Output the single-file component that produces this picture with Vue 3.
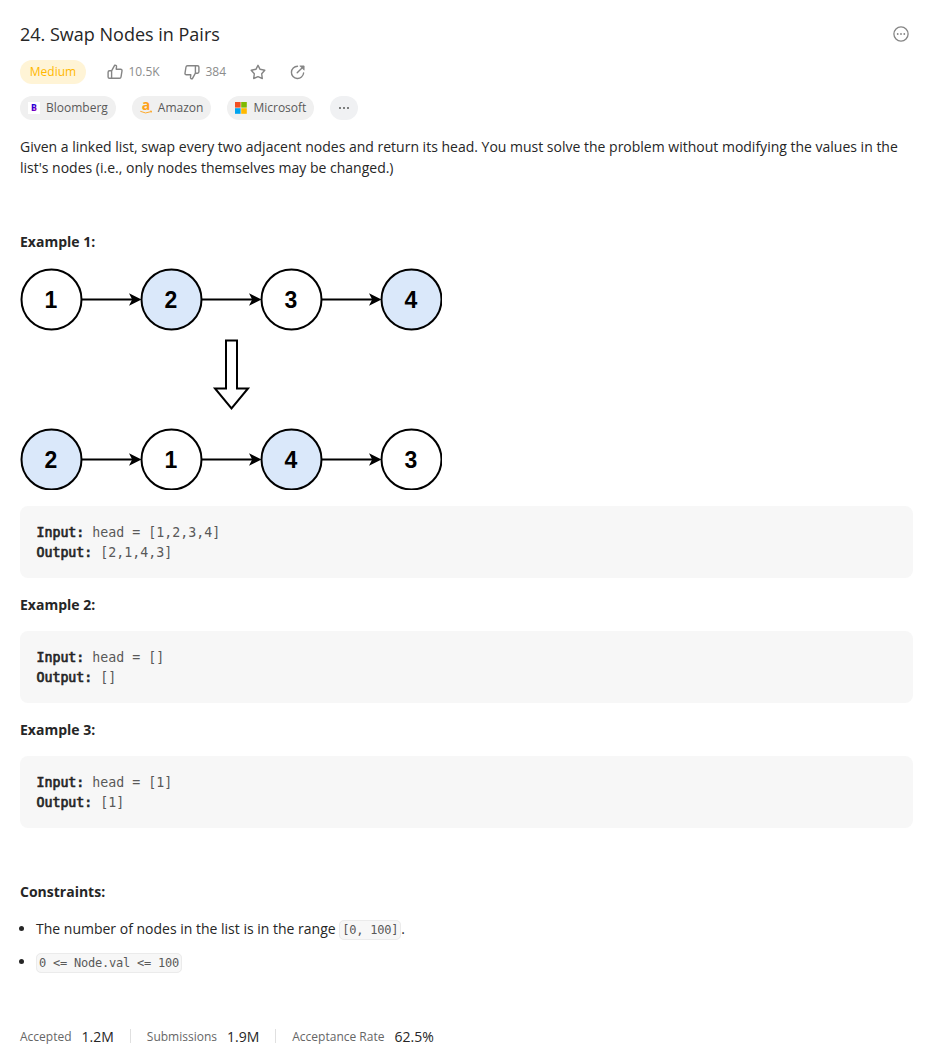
<script setup>
const companies = [
  { name: 'Bloomberg', logo: 'bloomberg' },
  { name: 'Amazon', logo: 'amazon' },
  { name: 'Microsoft', logo: 'microsoft' },
]

const rows = [
  { y: 31.5, nodes: [[1, false], [2, true], [3, false], [4, true]] },
  { y: 191.5, nodes: [[2, true], [1, false], [4, true], [3, false]] },
]

const examples = [
  { input: 'head = [1,2,3,4]', output: '[2,1,4,3]', diagram: true },
  { input: 'head = []', output: '[]' },
  { input: 'head = [1]', output: '[1]' },
]

const stats = [
  { label: 'Accepted', value: '1.2M' },
  { label: 'Submissions', value: '1.9M' },
  { label: 'Acceptance Rate', value: '62.5%' },
]
</script>

<template>
  <main class="page">
    <header class="title-row">
      <h1>24. Swap Nodes in Pairs</h1>
      <svg class="more" width="16" height="16" viewBox="0 0 16 16">
        <circle cx="8" cy="8" r="7.1" fill="none" stroke="#858585" stroke-width="1.3" />
        <circle cx="4.7" cy="8" r=".9" /><circle cx="8" cy="8" r=".9" /><circle cx="11.3" cy="8" r=".9" />
      </svg>
    </header>

    <div class="meta">
      <span class="level">Medium</span>
      <span class="action like">
        <svg width="16" height="16" viewBox="0 0 16 16">
          <path d="M4.6 6.8 7.6 1.3C9 1 9.7 1.8 9.5 2.9L9.2 5.2h4.4c1 0 1.6.8 1.4 1.7l-1 6.1c-.1.8-.7 1.3-1.5 1.3H4.6M4.6 6.8v7.5H2.5c-.8 0-1.4-.6-1.4-1.4V8.2c0-.8.6-1.4 1.4-1.4z" />
        </svg>
        <span>10.5K</span>
      </span>
      <span class="action dislike">
        <svg width="16" height="16" viewBox="0 0 16 16">
          <path d="M11.4 9.2 8.4 14.7C7 15 6.3 14.2 6.5 13.1L6.8 10.8H2.4c-1 0-1.6-.8-1.4-1.7l1-6.1c.1-.8.7-1.3 1.5-1.3h7.9M11.4 9.2V1.7h2.1c.8 0 1.4.6 1.4 1.4v4.7c0 .8-.6 1.4-1.4 1.4z" />
        </svg>
        <span>384</span>
      </span>
      <svg class="star" width="16" height="16" viewBox="0 0 16 16">
        <path d="M8 1.3 10.1 5.3 14.8 6.2 11.7 9.8 12.3 14.5 8 12.6 3.7 14.5 4.3 9.8 1.2 6.2 5.9 5.3z" />
      </svg>
      <svg class="share" width="16" height="16" viewBox="0 0 16 16">
        <path d="M7.5 2.3A6.1 6.1 0 1 0 13.6 9M7.2 8.7 13 2.9" /><path class="head" d="M10.2 1.9h3.9v3.9z" />
      </svg>
    </div>

    <div class="tags">
      <span v-for="company in companies" :key="company.name" class="tag">
        <svg v-if="company.logo === 'bloomberg'" width="12" height="12" viewBox="0 0 12 12">
          <defs>
            <linearGradient id="bloom" x1="0" y1="0" x2="1" y2="1">
              <stop offset=".35" stop-color="#2800d7" /><stop offset="1" stop-color="#e900a0" />
            </linearGradient>
          </defs>
          <rect width="12" height="12" fill="#fff" />
          <text x="6" y="9" text-anchor="middle" class="logo-b" fill="url(#bloom)">B</text>
        </svg>
        <svg v-else-if="company.logo === 'amazon'" class="amazon" width="12" height="12" viewBox="0 0 12 12">
          <text x="6" y="8" text-anchor="middle" class="logo-a">a</text>
          <path d="M.3 9.3Q5.6 12.4 10.8 9.7M10 9.2l1.6-.1-.4 1.5" fill="none" stroke="#fea116" stroke-width=".9" />
        </svg>
        <svg v-else width="12" height="12" viewBox="0 0 12 12">
          <rect x="0" y="0" width="5.6" height="5.6" fill="#f25022" />
          <rect x="6.2" y="0" width="5.6" height="5.6" fill="#7fba00" />
          <rect x="0" y="6.2" width="5.6" height="5.6" fill="#00a4ef" />
          <rect x="6.2" y="6.2" width="5.6" height="5.6" fill="#ffb900" />
        </svg>
        <span>{{ company.name }}</span>
      </span>
      <span class="tag dots">
        <svg width="12" height="12" viewBox="0 0 12 12">
          <circle cx="2" cy="6" r="1" /><circle cx="6" cy="6" r="1" /><circle cx="10" cy="6" r="1" />
        </svg>
      </span>
    </div>

    <article>
      <p>
        Given a linked list, swap every two adjacent nodes and return its head. You must solve the problem
        without modifying the values in the list's nodes (i.e., only nodes themselves may be changed.)
      </p>
      <p>&nbsp;</p>

      <template v-for="(example, i) in examples" :key="i">
        <p><strong>Example {{ i + 1 }}:</strong></p>
        <svg v-if="example.diagram" class="diagram" width="422" height="222" viewBox="0 0 422 222">
          <g v-for="row in rows" :key="row.y">
            <g v-for="n in 3" :key="n">
              <path :d="`M${n * 120 - 58} ${row.y}h52`" stroke="#000" stroke-width="2" />
              <path :d="`M${n * 120 + 1.5} ${row.y}l-12.5 -6.2 3.2 6.2 -3.2 6.2z`" />
            </g>
            <g v-for="([label, shaded], n) in row.nodes" :key="n">
              <circle :cx="31.5 + n * 120" :cy="row.y" r="30" :fill="shaded ? '#dae8fa' : '#fff'" stroke="#000" stroke-width="2" />
              <text :x="31 + n * 120" :y="row.y + 8.5" text-anchor="middle" class="node">{{ label }}</text>
            </g>
          </g>
          <path d="M206 72.5h11v48h11L211.500 140.500 195 120.500h11z" fill="#fff" stroke="#000" stroke-width="2" />
        </svg>
        <pre><b>Input:</b> {{ example.input }}
<b>Output:</b> {{ example.output }}</pre>
      </template>

      <p>&nbsp;</p>
      <p><strong>Constraints:</strong></p>
      <ul>
        <li>The number of nodes in the list is in the range <code>[0, 100]</code>.</li>
        <li><code>0 &lt;= Node.val &lt;= 100</code></li>
      </ul>
    </article>

    <footer class="stats">
      <div v-for="stat in stats" :key="stat.label" class="stat">
        <span class="label">{{ stat.label }}</span>
        <span class="value">{{ stat.value }}</span>
      </div>
    </footer>
  </main>
</template>

<style>
body {
  background: #fff;
}
</style>

<style scoped>
.page {
  box-sizing: border-box;
  height: 1060px;
  padding: 20px 20px 0;
  overflow: hidden;
  color: #262626;
  font: 14px/21px "Open Sans", sans-serif;
}
.title-row {
  display: flex;
  justify-content: space-between;
  align-items: center;
  height: 28px;
}
h1 {
  margin: 0;
  font-size: 18px;
  font-weight: 400;
  line-height: 28px;
}
.more {
  margin-right: 4px;
  fill: #858585;
}
.meta {
  display: flex;
  align-items: center;
  height: 24px;
  margin-top: 12px;
  color: #8c8c8c;
  font-size: 12px;
}
.meta path {
  fill: none;
  stroke: #858585;
  stroke-width: 1.4;
  stroke-linejoin: round;
  stroke-linecap: round;
}
.meta .head {
  fill: #858585;
  stroke-width: .8;
}
.level {
  width: 66px;
  border-radius: 12px;
  background: #fff4d6;
  color: #ffb800;
  line-height: 24px;
  text-align: center;
}
.action {
  display: flex;
  align-items: center;
  gap: 5.5px;
  line-height: 20px;
}
.like {
  width: 56px;
  margin-left: 21px;
}
.dislike {
  width: 44px;
  margin-left: 21px;
}
.star {
  margin-left: 22px;
}
.share {
  margin-left: 24px;
}
.tags {
  display: flex;
  gap: 16px;
  margin-top: 12px;
}
.tag {
  display: flex;
  align-items: center;
  gap: 6px;
  height: 24px;
  padding: 0 8px;
  border-radius: 12px;
  background: #f0f0f0;
  color: #595959;
  font-size: 12px;
  line-height: 20px;
}
.dots {
  background: #f0f1f3;
  fill: #595959;
}
.amazon {
  overflow: visible;
}
.logo-b {
  font: bold 8px "DejaVu Sans", sans-serif;
}
.logo-a {
  fill: #fea116;
  font: bold 14px "Open Sans", sans-serif;
}
article {
  padding-top: 16px;
}
p {
  margin: 0 0 16px;
}
.diagram {
  display: block;
  margin-bottom: 16px;
}
.node {
  font: bold 23px "Liberation Sans", Arial, sans-serif;
}
pre {
  margin: 0 0 16px;
  padding: 17px 16px 15px 16.4px;
  border-radius: 8px;
  background: #f7f7f7;
  color: #595959;
  font: 13.29px/20px "DejaVu Sans Mono", monospace;
}
pre b {
  color: #262626;
  font-weight: 400;
  -webkit-text-stroke: .7px #262626;
}
ul {
  margin: 0;
  padding-left: 16px;
}
li {
  margin-bottom: 12px;
}
code {
  padding: 2px;
  border: 1px solid #ebebeb;
  border-radius: 5px;
  background: #f7f7f7;
  color: #595959;
  font: 12px "DejaVu Sans Mono", monospace;
  letter-spacing: -.224px;
}
.stats {
  display: flex;
  align-items: center;
  margin-top: 57px;
}
.stat {
  display: flex;
  align-items: center;
  gap: 10px;
  height: 14px;
}
.stat + .stat {
  margin-left: 16px;
  padding-left: 16px;
  border-left: 1px solid #e0e0e0;
}
.label {
  color: #666;
  font-size: 12px;
}
</style>
